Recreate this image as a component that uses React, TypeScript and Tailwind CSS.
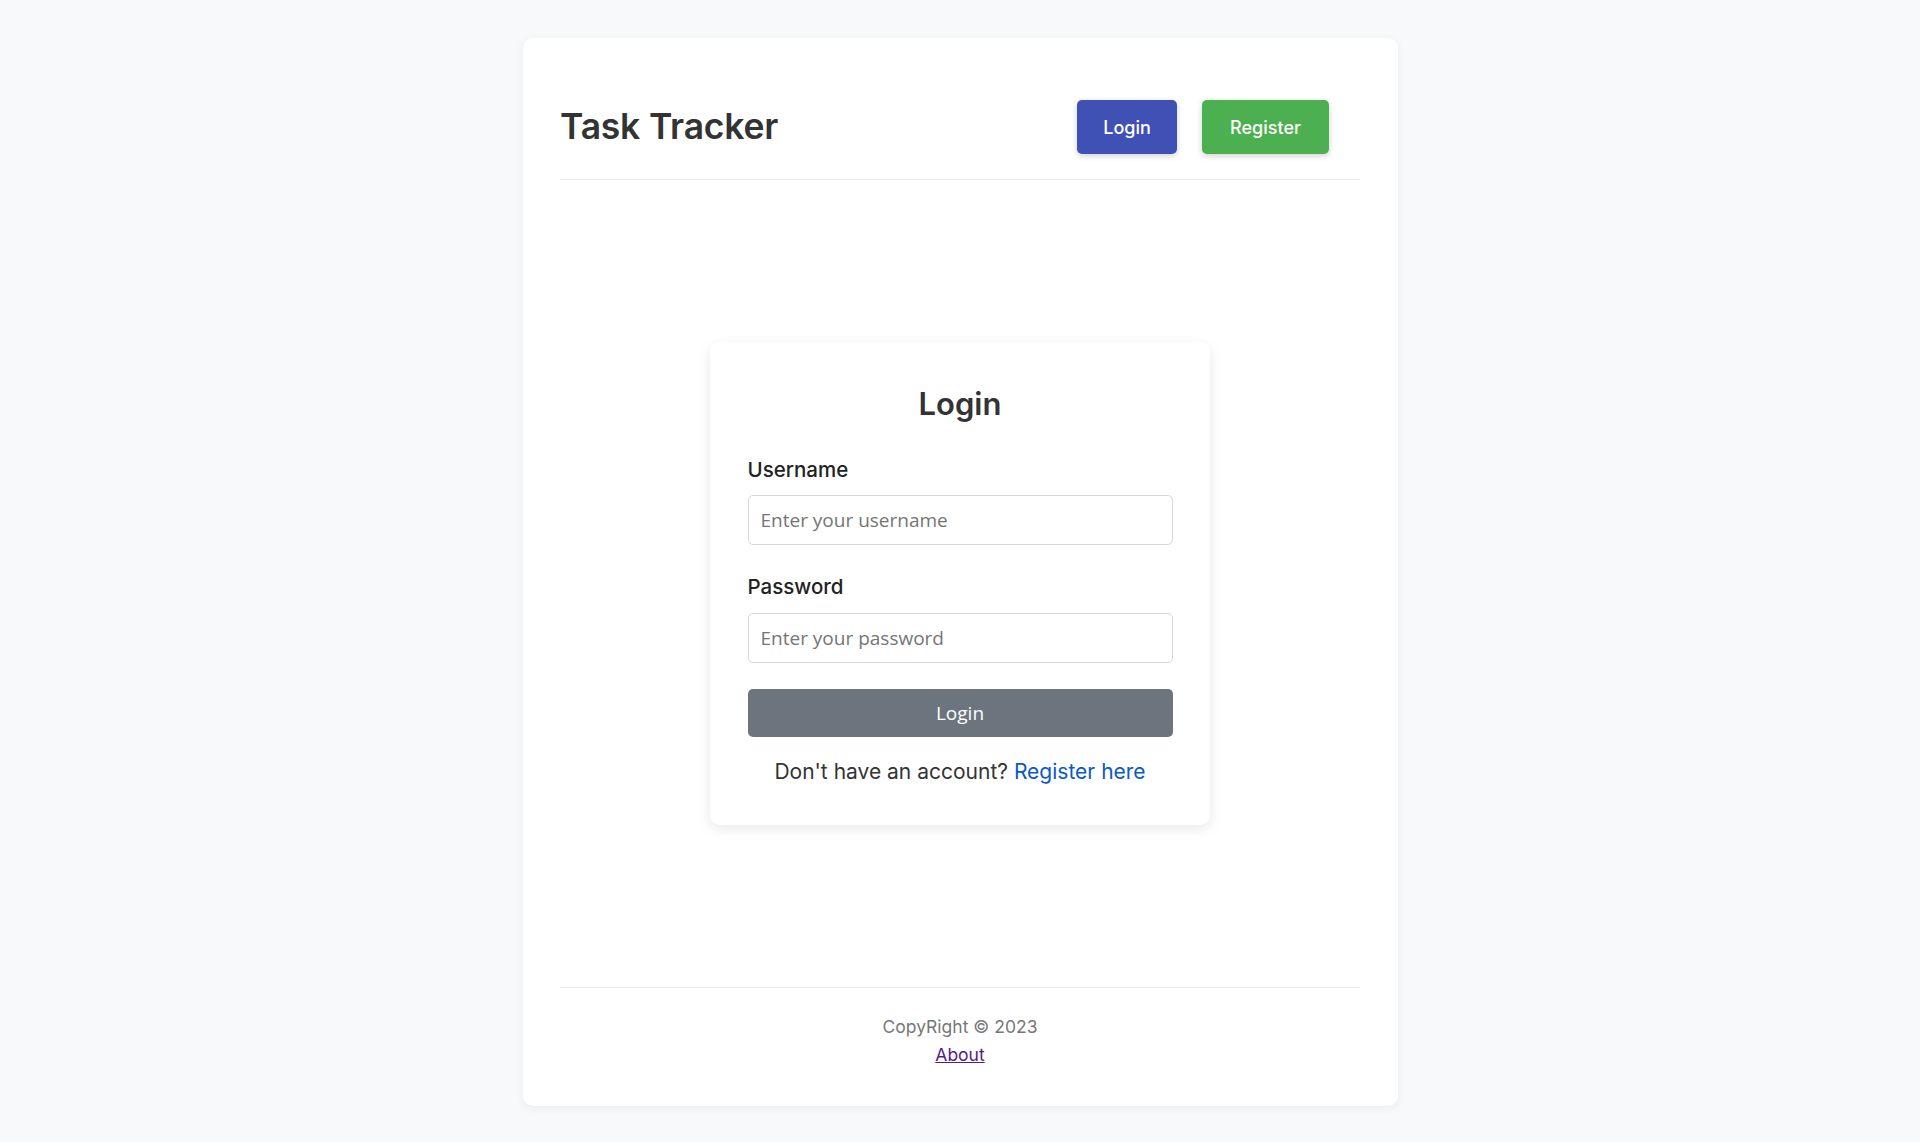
import React from 'react';

const heading = { fontFamily: 'Inter, "DejaVu Sans", sans-serif' };

function Header() {
  return (
    <header className="flex items-center justify-between py-[25px] border-b border-[#e5e7eb]">
      <h1 className="text-[35.5px] leading-[40px] font-semibold text-[#333] tracking-[-0.2px]">Task Tracker</h1>
      <div className="flex items-center gap-[25px] mr-[31px]">
        <button className="h-[54px] w-[100px] rounded-[5px] bg-[#3f51b5] text-white text-[18px] font-medium shadow-[0_2px_6px_rgba(0,0,0,0.18)]">
          Login
        </button>
        <button className="h-[54px] w-[127px] rounded-[5px] bg-[#4caf50] text-white text-[18px] font-medium shadow-[0_2px_6px_rgba(0,0,0,0.18)]">
          Register
        </button>
      </div>
    </header>
  );
}

function LoginForm() {
  const inputFont = { fontFamily: '"Open Sans", "Liberation Sans", sans-serif' };
  return (
    <div className="w-[500px] bg-white rounded-[10px] px-[37.5px] pt-[42px] pb-[40px] shadow-[0_4px_14px_rgba(0,0,0,0.09)]">
      <h2 className="text-center text-[31px] leading-[40px] font-semibold text-[#333]">Login</h2>
      <div className="mt-[34px]">
        <label className="block text-[20.5px] leading-[24px] font-medium text-[#222] mb-[13px]">Username</label>
        <input
          type="text"
          placeholder="Enter your username"
          style={inputFont}
          className="block w-full h-[50px] px-[12px] rounded-[5px] border border-[#d6d6d6] text-[19px] text-[#333] placeholder:text-[#757575] outline-none"
        />
      </div>
      <div className="mt-[30px]">
        <label className="block text-[20.5px] leading-[24px] font-medium text-[#222] mb-[14px]">Password</label>
        <input
          type="password"
          placeholder="Enter your password"
          style={inputFont}
          className="block w-full h-[50px] px-[12px] rounded-[5px] border border-[#d6d6d6] text-[19px] text-[#333] placeholder:text-[#757575] outline-none"
        />
      </div>
      <button
        style={inputFont}
        className="mt-[26px] w-full h-[48px] rounded-[5px] bg-[#6c757d] text-white text-[19px]"
      >
        Login
      </button>
      <p className="mt-[23px] mb-[1px] text-center text-[21px] leading-[24px] text-[#333]">
        Don't have an account? <a href="#" className="text-[#0a58ca]">Register here</a>
      </p>
    </div>
  );
}

function Footer() {
  return (
    <footer className="border-t border-[#e5e7eb] pt-[25px] text-center">
      <p className="text-[17.5px] leading-[28px] text-[#777]">CopyRight © 2023</p>
      <a href="#" className="text-[17.5px] leading-[28px] text-[#551a8b] underline">About</a>
    </footer>
  );
}

export default function App() {
  return (
    <div className="min-h-[1142px] bg-[#f8f9fa] pt-[38px]" style={heading}>
      <div className="mx-auto w-[875px] bg-white rounded-[10px] px-[37.5px] pt-[37px] pb-[37px] shadow-[0_2px_10px_rgba(0,0,0,0.06)]">
        <Header />
        <main className="h-[807px] flex items-center justify-center">
          <LoginForm />
        </main>
        <Footer />
      </div>
    </div>
  );
}
